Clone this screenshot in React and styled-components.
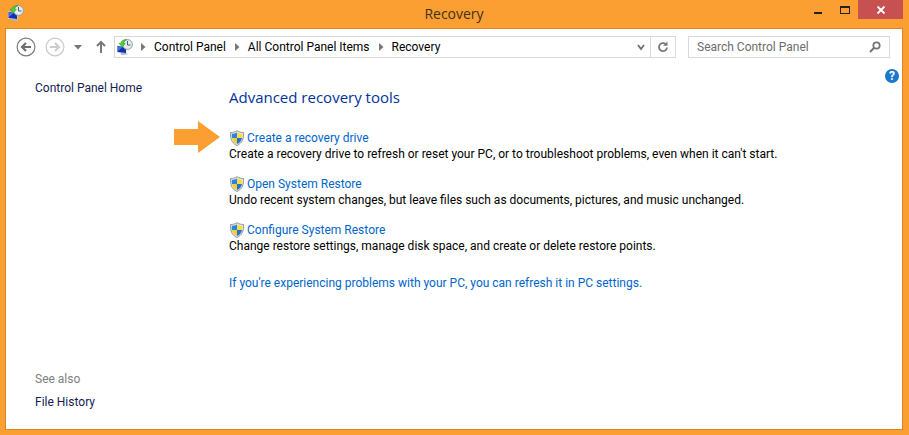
import React from "react";
import styled, { createGlobalStyle } from "styled-components";

const crumbs = ["Control Panel", "All Control Panel Items", "Recovery"];

const tools = [
  {
    name: "Create a recovery drive",
    description:
      "Create a recovery drive to refresh or reset your PC, or to troubleshoot problems, even when it can't start.",
    marked: true,
  },
  {
    name: "Open System Restore",
    description:
      "Undo recent system changes, but leave files such as documents, pictures, and music unchanged.",
  },
  {
    name: "Configure System Restore",
    description:
      "Change restore settings, manage disk space, and create or delete restore points.",
  },
];

const RecoveryIcon = () => (
  <svg width="16" height="16" viewBox="0 0 16 16" aria-hidden="true">
    <path d="M0 6.500 9.500 8v6.500L0 13.500z" fill="#dde3ec" />
    <path d="M.5 7 9 8.300v5.700L.5 13z" fill="#1230b4" />
    <path d="M1 7.500 5.500 8.200 1 12z" fill="#3f74e8" />
    <path d="M4 14h5l2 1.200-5 .8-2.500-.6z" fill="#a9b8ca" />
    <circle cx="10.500" cy="5.500" r="4.900" fill="#e6ecf0" stroke="#939da2" />
    <path d="M10.500 2v4h3" fill="none" stroke="#4c5f70" />
    <path
      d="M10 .6C6.500.3 4.300 1.700 3.900 4.200H2l3.300 4 3-4H6.700C7 2.500 8 1.500 10 .6z"
      fill="#4fcf38"
      stroke="#259322"
      strokeWidth=".5"
    />
  </svg>
);

const ShieldIcon = () => (
  <svg width="16" height="16" viewBox="0 0 16 16" aria-hidden="true">
    <path
      d="M8 .7c2 1.300 4 1.800 6.500 1.800.3 6-1 10.500-6.500 13C2.500 13 1.200 8.500 1.500 2.500 4 2.500 6 2 8 .7z"
      fill="#e3e5e7"
      stroke="#8f979c"
    />
    <path d="M8 2.400V8H3C2.700 6.500 2.700 5.200 2.800 3.800 4.800 3.700 6.500 3.300 8 2.400z" fill="#2a86dd" />
    <path d="M8 2.400V8h5c.3-1.500.3-2.800.2-4.200C11.200 3.700 9.500 3.300 8 2.400z" fill="#ffdb45" />
    <path d="M8 14V8H3c.6 2.700 2 4.800 5 6z" fill="#fbcd2b" />
    <path d="M8 14V8h5c-.6 2.700-2 4.800-5 6z" fill="#2272cc" />
  </svg>
);

const RoundArrowIcon = ({ flip, color, ring }) => (
  <svg width="20" height="20" viewBox="0 0 20 20" aria-hidden="true">
    <circle cx="10" cy="10" r="8.900" fill="none" stroke={ring} strokeWidth="1.200" />
    <path
      d="M15 10H6.500M10 6 6 10l4 4"
      fill="none"
      stroke={color}
      strokeWidth="2.200"
      transform={flip ? "translate(20 0) scale(-1 1)" : undefined}
    />
  </svg>
);

const App = () => {
  return (
    <>
      <GlobalStyle />
      <Window>
        <TitleBar>
          <SystemIcon>
            <RecoveryIcon />
          </SystemIcon>
          <Title>Recovery</Title>
          <Caption>
            <CaptionButton aria-label="Minimize">
              <svg width="10" height="10" viewBox="0 0 10 10">
                <path d="M1 7h8v2H1z" fill="#222" />
              </svg>
            </CaptionButton>
            <CaptionButton aria-label="Maximize">
              <svg width="10" height="10" viewBox="0 0 10 10">
                <path d="M0 1h10v8H0zM1 3v5h8V3z" fill="#222" fillRule="evenodd" />
              </svg>
            </CaptionButton>
            <CaptionButton aria-label="Close" $close>
              <svg width="10" height="10" viewBox="0 0 10 10">
                <path d="m1.500 1.500 7 7m0-7-7 7" stroke="#fff" strokeWidth="1.800" />
              </svg>
            </CaptionButton>
          </Caption>
        </TitleBar>

        <Client>
          <NavBar>
            <NavButtons>
              <IconButton aria-label="Back">
                <RoundArrowIcon color="#6e6e6e" ring="#7c7c7c" />
              </IconButton>
              <IconButton aria-label="Forward">
                <RoundArrowIcon flip color="#cccccc" ring="#cacaca" />
              </IconButton>
              <IconButton aria-label="Recent locations">
                <svg width="8" height="5" viewBox="0 0 8 5">
                  <path d="M0 0h8L4 4.500z" fill="#757575" />
                </svg>
              </IconButton>
              <IconButton aria-label="Up">
                <svg width="10" height="14" viewBox="0 0 10 14">
                  <path d="M5 13V2M1 6l4-4 4 4" fill="none" stroke="#787878" strokeWidth="2" />
                </svg>
              </IconButton>
            </NavButtons>

            <AddressBar>
              <RecoveryIcon />
              <Crumbs aria-label="Address">
                {crumbs.map((crumb) => (
                  <Crumb key={crumb}>
                    <svg width="5" height="8" viewBox="0 0 5 8" aria-hidden="true">
                      <path d="M0 0v8l4.500-4z" fill="#777" />
                    </svg>
                    <CrumbLink href="#">{crumb}</CrumbLink>
                  </Crumb>
                ))}
              </Crumbs>
              <AddressButton aria-label="Previous locations">
                <svg width="8" height="7" viewBox="0 0 8 7">
                  <path d="m1 1 3 4 3-4" fill="none" stroke="#707070" strokeWidth="1.800" />
                </svg>
              </AddressButton>
              <AddressButton aria-label="Refresh" $divided>
                <svg width="12" height="12" viewBox="0 0 12 12">
                  <path
                    d="M8.600 3A4 4 0 1 0 10 6.500"
                    fill="none"
                    stroke="#777"
                    strokeWidth="1.800"
                  />
                  <path d="M6 4.800h4.500V.5z" fill="#777" />
                </svg>
              </AddressButton>
            </AddressBar>

            <SearchBox>
              <SearchInput
                type="search"
                aria-label="Search Control Panel"
                placeholder="Search Control Panel"
              />
              <IconButton aria-label="Search">
                <svg width="12" height="12" viewBox="0 0 12 12">
                  <circle cx="7.500" cy="4.500" r="3.200" fill="none" stroke="#757575" strokeWidth="1.700" />
                  <path d="M5.200 6.800 1 11" stroke="#757575" strokeWidth="2" />
                </svg>
              </IconButton>
            </SearchBox>
          </NavBar>

          <Body>
            <Sidebar>
              <SideLink href="#">Control Panel Home</SideLink>
              <SeeAlso>
                <SeeAlsoTitle>See also</SeeAlsoTitle>
                <SideLink href="#">File History</SideLink>
              </SeeAlso>
            </Sidebar>

            <Main>
              <Heading>Advanced recovery tools</Heading>
              <ToolList>
                {tools.map((tool) => (
                  <Tool key={tool.name}>
                    {tool.marked && (
                      <Marker width="46" height="32" viewBox="0 0 46 32" aria-hidden="true">
                        <path d="M0 8h24V0l22 16-22 16v-8H0z" fill="#fc9f32" />
                      </Marker>
                    )}
                    <ToolLink href="#">
                      <ShieldIcon />
                      {tool.name}
                    </ToolLink>
                    <Description>{tool.description}</Description>
                  </Tool>
                ))}
              </ToolList>
              <TaskLink href="#">
                If you're experiencing problems with your PC, you can refresh it in PC settings.
              </TaskLink>
            </Main>

            <HelpButton aria-label="Help">?</HelpButton>
          </Body>
        </Client>
      </Window>
    </>
  );
};

export default App;

const GlobalStyle = createGlobalStyle`
  * {
    box-sizing: border-box;
  }
  body {
    margin: 0;
    background-color: #fc9f32;
    color: #000;
    font-family: "Segoe UI", Roboto, sans-serif;
    font-size: 12px;
    line-height: 16px;
  }
  button, input {
    font: inherit;
  }
  h1, h2 {
    font-family: "Segoe UI", "Open Sans", sans-serif;
  }
  a {
    text-decoration: none;
  }
  svg {
    display: block;
    flex: none;
  }
`;

const Window = styled.div`
  display: flex;
  flex-direction: column;
  min-height: 100vh;
  padding: 0 6px 5px 5px;
`;

const TitleBar = styled.header`
  display: grid;
  grid-template-columns: 1fr auto 1fr;
  height: 28px;
`;

const SystemIcon = styled.div`
  padding: 5px 3px;
`;

const Title = styled.h1`
  margin: 0;
  color: #40301c;
  font-size: 14px;
  font-weight: 400;
  line-height: 28px;
`;

const Caption = styled.div`
  display: flex;
  justify-content: flex-end;
  align-items: flex-start;
`;

const CaptionButton = styled.button`
  display: flex;
  align-items: center;
  justify-content: center;
  width: ${(props) => (props.$close ? "45px" : "27px")};
  height: 19px;
  padding: 0;
  border: 0;
  background: ${(props) => (props.$close ? "#c75050" : "transparent")};
`;

const Client = styled.div`
  display: flex;
  flex: 1;
  flex-direction: column;
  border: 1px solid #d9862a;
  background: #fff;
`;

const NavBar = styled.nav`
  display: flex;
  align-items: center;
  gap: 12px;
  padding: 7px 12px 7px 10px;
`;

const NavButtons = styled.div`
  display: flex;
  align-items: center;
  gap: 9px;
  margin-right: -4px;

  & > :nth-child(3) {
    margin-right: 5px;
  }
`;

const IconButton = styled.button`
  display: flex;
  align-items: center;
  justify-content: center;
  padding: 0;
  border: 0;
  background: transparent;
`;

const AddressBar = styled.div`
  display: flex;
  flex: 1;
  align-items: center;
  height: 22px;
  padding-left: 2px;
  border: 1px solid #d9d9d9;
`;

const Crumbs = styled.div`
  display: flex;
  flex: 1;
  gap: 9px;
  margin-left: 8px;
`;

const Crumb = styled.span`
  display: flex;
  align-items: center;
  gap: 8px;
  white-space: nowrap;
`;

const CrumbLink = styled.a`
  color: #000;
`;

const AddressButton = styled.button`
  display: flex;
  align-items: center;
  justify-content: center;
  align-self: stretch;
  width: ${(props) => (props.$divided ? "25px" : "18px")};
  padding: 0;
  border: 0;
  border-left: ${(props) => (props.$divided ? "1px solid #d9d9d9" : "0")};
  background: transparent;
`;

const SearchBox = styled.div`
  display: flex;
  align-items: center;
  width: 202px;
  height: 22px;
  padding: 0 8px;
  border: 1px solid #d9d9d9;
`;

const SearchInput = styled.input`
  flex: 1;
  min-width: 0;
  padding: 0;
  border: 0;
  outline: 0;
  background: transparent;

  &::placeholder {
    color: #6d6d6d;
    opacity: 1;
  }
`;

const Body = styled.div`
  display: flex;
  flex: 1;
  padding-right: 3px;
`;

const Sidebar = styled.aside`
  display: flex;
  flex-direction: column;
  justify-content: space-between;
  width: 223px;
  padding: 15px 0 19px 29px;
`;

const SideLink = styled.a`
  color: #151c55;
`;

const SeeAlso = styled.div`
  display: flex;
  flex-direction: column;
  gap: 7px;
`;

const SeeAlsoTitle = styled.span`
  color: #808080;
`;

const Main = styled.main`
  flex: 1;
  padding-top: 20px;
`;

const Heading = styled.h2`
  margin: 0 0 21px;
  color: #003399;
  font-size: 15px;
  font-weight: 400;
  line-height: 24px;
`;

const ToolList = styled.ul`
  display: flex;
  flex-direction: column;
  gap: 14px;
  margin: 0 0 21px;
  padding: 0;
  list-style: none;
`;

const Tool = styled.li`
  position: relative;
`;

/* the arrow hangs over the gutter, left of the tool it points at */
const Marker = styled.svg`
  position: absolute;
  top: -9px;
  right: 100%;
  margin-right: 9px;
`;

const TaskLink = styled.a`
  color: #0066cc;
`;

const ToolLink = styled(TaskLink)`
  display: flex;
  align-items: center;
  gap: 2px;
`;

const Description = styled.p`
  margin: 0;
`;

const HelpButton = styled.button`
  width: 14px;
  height: 14px;
  margin-top: 4px;
  padding: 0;
  border: 0;
  border-radius: 50%;
  background: #1979ca;
  color: #fff;
  font-size: 12px;
  font-weight: 700;
  line-height: 14px;
`;
